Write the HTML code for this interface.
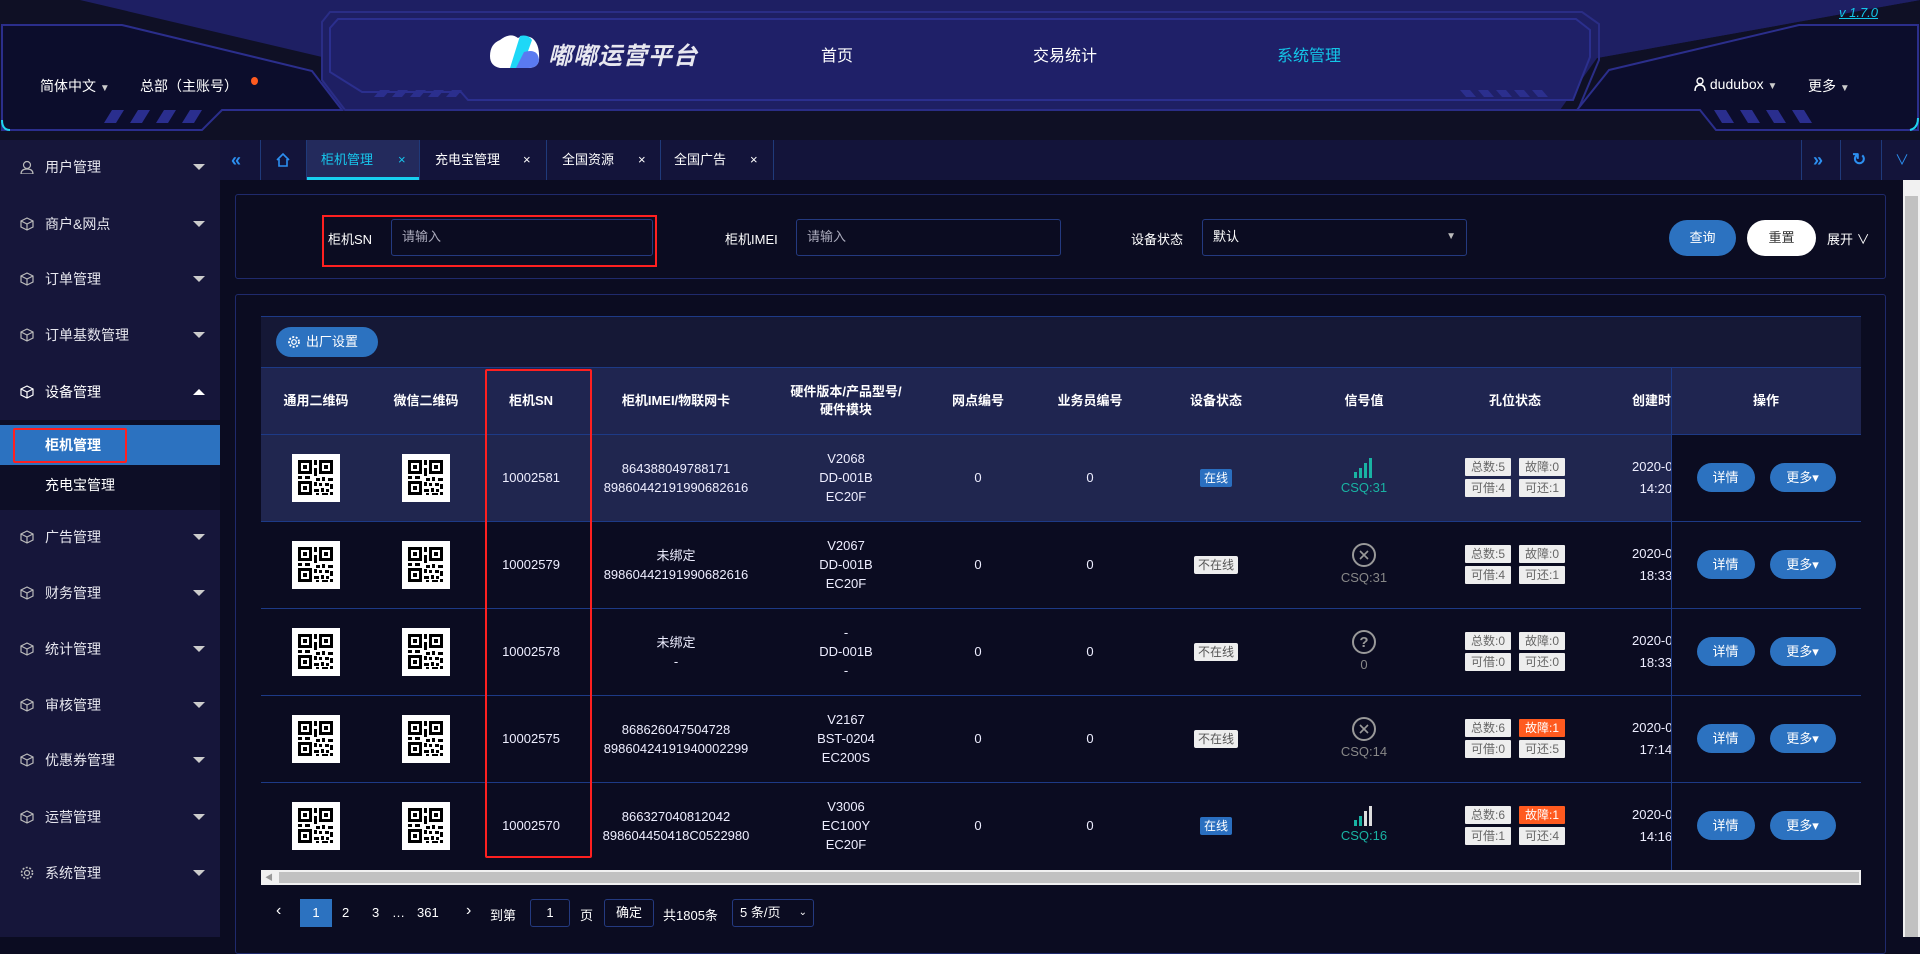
<!DOCTYPE html>
<html><head><meta charset="utf-8">
<style>
*{margin:0;padding:0;box-sizing:border-box}
body{width:1920px;height:937px;overflow:hidden;background:#0b0c21;font-family:"Liberation Sans","Noto Sans CJK SC",sans-serif;color:#fff;position:relative;font-size:13px}
.a{position:absolute}
.side{left:0;top:140px;width:220px;height:797px;background:#16163a}
.mi{position:absolute;left:0;width:220px;height:40px;line-height:40px;font-size:14px;color:#e6e6ee}
.mi svg{position:absolute;left:20px;top:13px}
.mi .t{position:absolute;left:45px}
.mi .ar{position:absolute;left:193px;top:17px;width:0;height:0;border-left:6px solid transparent;border-right:6px solid transparent;border-top:6px solid #ccc}
.tab{position:absolute;top:140px;height:40px;line-height:40px;font-size:13px;color:#fff}
.sep{position:absolute;top:140px;width:1px;height:40px;background:#1f3a7a}
.lbl{font-size:13px;color:#fff}
.inp{border:1px solid #243a80;border-radius:3px;background:#0b0c21;color:#aab;font-size:13px;line-height:34px;padding-left:10px}
.th{position:absolute;top:367px;height:67px;font-weight:bold;font-size:13px;text-align:center;display:flex;align-items:center;justify-content:center;line-height:18px}
.cell{position:absolute;text-align:center;display:flex;align-items:center;justify-content:center;flex-direction:column;font-size:13px;line-height:19px;color:#eef}
.qr{width:48px;height:48px;background:#fff}
.tag{display:inline-block;padding:0 4px;font-size:12px;line-height:18px;border-radius:2px}
.on{background:#2a6fc0;color:#fff}
.off{background:#eee;color:#555}
.kw{display:grid;grid-template-columns:46px 46px;gap:3px 8px}
.kw span{background:#eee;color:#666;font-size:12px;line-height:18px;border-radius:1px}
.kw span.r{background:#ff5a1f;color:#fff}
.btn{display:inline-block;background:#2c72c0;color:#fff;border-radius:15px;height:29px;line-height:29px;font-size:13px}
.hl{position:absolute;left:261px;width:1600px;height:1px;background:#1d3a86}
</style></head><body>

<!-- HEADER -->
<svg class="a" style="left:0;top:0" width="1920" height="140">
<rect width="1920" height="140" fill="#1e1f63"/>
<rect y="110" width="1920" height="30" fill="#0f1025"/>
<polygon points="0,0 80,0 322,57 322,110 0,110" fill="#0f1025"/>
<polygon points="1920,0 1920,110 1560,110 1597,58" fill="#0f1025"/>
<polygon points="1920,0 1597,58 1597,0" fill="#1e1f63"/>
<!-- left panel -->
<polygon points="2,25 122,25 312,71 342,110 222,110 202,130 2,130" fill="#0c0d2c" stroke="#2b2e8c" stroke-width="2"/>
<g fill="#2a2e8e"><polygon points="112,110 124,110 116,123 104,123"/><polygon points="138,110 150,110 142,123 130,123"/><polygon points="164,110 176,110 168,123 156,123"/><polygon points="190,110 202,110 194,123 182,123"/></g>
<path d="M2 120 Q2 130 10 130" stroke="#1fd3f0" stroke-width="2" fill="none"/>
<!-- center panel -->
<polygon points="330,12 1582,12 1599,24 1599,60 1578,110 345,110 322,80 322,22" fill="none" stroke="#2a2d86" stroke-width="2"/>
<polygon points="338,19 1576,19 1590,30 1590,57 1573,100 468,100 461,92 362,92 330,72 330,28" fill="#1f2068" stroke="#2b2f8e" stroke-width="2"/>
<g fill="#2b2f8e"><polygon points="380,90 390,90 384,97 374,97"/><polygon points="398,90 408,90 402,97 392,97"/><polygon points="416,90 426,90 420,97 410,97"/><polygon points="434,90 444,90 438,97 428,97"/><polygon points="452,90 462,90 456,97 446,97"/></g>
<g fill="#2b2f8e"><polygon points="1460,90 1470,90 1476,97 1466,97"/><polygon points="1478,90 1488,90 1494,97 1484,97"/><polygon points="1496,90 1506,90 1512,97 1502,97"/><polygon points="1514,90 1524,90 1530,97 1520,97"/><polygon points="1532,90 1542,90 1548,97 1538,97"/></g>
<!-- right panel -->
<polygon points="1609,70 1799,25 1918,25 1918,130 1716,130 1700,110 1577,110" fill="#0c0d2c" stroke="#2b2e8c" stroke-width="2"/>
<g fill="#2a2e8e"><polygon points="1714,110 1726,110 1734,123 1722,123"/><polygon points="1740,110 1752,110 1760,123 1748,123"/><polygon points="1766,110 1778,110 1786,123 1774,123"/><polygon points="1792,110 1804,110 1812,123 1800,123"/></g>
<path d="M1918 118 Q1918 128 1910 130" stroke="#1fd3f0" stroke-width="2" fill="none"/>
<!-- logo -->
<path d="M500 40 Q510 32 518 38 Q524 34 532 38 Q540 44 539 60 Q538 68 528 68 L500 68 Q490 66 490 56 Q490 44 500 40Z" fill="#fff"/>
<path d="M520 36 Q528 34 532 40 L522 68 L510 68 Z" fill="#1ed8f7"/>
<path d="M524 52 Q538 48 539 60 Q538 68 528 68 L516 68Z" fill="#5a7af0"/>
</svg>
<div class="a" style="left:548px;top:36px;font-size:24px;font-weight:bold;font-style:italic;color:#e8e8f0;letter-spacing:1px">嘟嘟运营平台</div>
<div class="a" style="left:821px;top:42px;font-size:16px">首页</div>
<div class="a" style="left:1033px;top:42px;font-size:16px">交易统计</div>
<div class="a" style="left:1277px;top:42px;font-size:16px;color:#13c6e8">系统管理</div>
<div class="a" style="left:40px;top:76px;font-size:14px">简体中文 <span style="font-size:10px;color:#ccc">▼</span></div>
<div class="a" style="left:140px;top:76px;font-size:14px">总部（主账号）</div>
<div class="a" style="left:251px;top:77px;width:7px;height:8px;border-radius:50%;background:#ff5a1f"></div>
<div class="a" style="left:1694px;top:76px;font-size:14px">
<svg width="12" height="14" viewBox="0 0 12 14" style="vertical-align:-2px"><circle cx="6" cy="4" r="3" fill="none" stroke="#fff" stroke-width="1.4"/><path d="M1 14 Q1 8 6 8 Q11 8 11 14" fill="none" stroke="#fff" stroke-width="1.4"/></svg> dudubox <span style="font-size:10px;color:#ccc">▼</span></div>
<div class="a" style="left:1808px;top:76px;font-size:14px">更多 <span style="font-size:10px;color:#ccc">▼</span></div>
<div class="a" style="left:1839px;top:5px;font-size:13px;font-style:italic;color:#13c6e8;text-decoration:underline">v 1.7.0</div>

<!-- TAB BAR -->
<div class="a" style="left:220px;top:140px;width:1700px;height:40px;background:#13143a"></div>
<div class="tab" style="left:231px;color:#2c8ff0;font-size:18px;font-weight:bold">«</div>
<div class="sep" style="left:260px"></div>
<svg class="a" style="left:275px;top:152px" width="16" height="16" viewBox="0 0 16 16"><path d="M2 8 L8 2 L14 8 M4 7 V14 H12 V7" fill="none" stroke="#2c8ff0" stroke-width="1.6"/></svg>
<div class="sep" style="left:306px"></div>
<div class="a" style="left:307px;top:140px;width:112px;height:40px;background:#232a5c;border-bottom:3px solid #17d0f0"></div>
<div class="tab" style="left:321px;color:#17c8ee">柜机管理</div><div class="tab" style="left:398px;color:#17c8ee">×</div>
<div class="sep" style="left:419px"></div>
<div class="tab" style="left:435px">充电宝管理</div><div class="tab" style="left:523px">×</div>
<div class="sep" style="left:546px"></div>
<div class="tab" style="left:562px">全国资源</div><div class="tab" style="left:638px">×</div>
<div class="sep" style="left:660px"></div>
<div class="tab" style="left:674px">全国广告</div><div class="tab" style="left:750px">×</div>
<div class="sep" style="left:773px"></div>
<div class="sep" style="left:1801px"></div><div class="sep" style="left:1840px"></div><div class="sep" style="left:1881px"></div>
<div class="tab" style="left:1813px;color:#2c8ff0;font-size:18px;font-weight:bold">»</div>
<div class="tab" style="left:1852px;color:#2c8ff0;font-size:17px;font-weight:bold">↻</div>
<div class="tab" style="left:1895px;color:#2c8ff0;font-size:14px">∨</div>

<!-- SIDEBAR -->
<div class="a side">
<div class="mi" style="top:7px"><svg width="14" height="14" viewBox="0 0 14 14"><circle cx="7" cy="5" r="3.5" fill="none" stroke="#bbb" stroke-width="1.2"/><path d="M1 14 Q1 9 7 9 Q13 9 13 14Z" fill="none" stroke="#bbb" stroke-width="1.2"/></svg><span class="t">用户管理</span><i class="ar"></i></div>
<div class="mi" style="top:64px"><svg width="14" height="14" viewBox="0 0 14 14"><path d="M7 1 L13 4 V10 L7 13 L1 10 V4Z M1 4 L7 7 L13 4 M7 7 V13" fill="none" stroke="#bbb" stroke-width="1.2"/></svg><span class="t">商户&amp;网点</span><i class="ar"></i></div>
<div class="mi" style="top:119px"><svg width="14" height="14" viewBox="0 0 14 14"><path d="M7 1 L13 4 V10 L7 13 L1 10 V4Z M1 4 L7 7 L13 4 M7 7 V13" fill="none" stroke="#bbb" stroke-width="1.2"/></svg><span class="t">订单管理</span><i class="ar"></i></div>
<div class="mi" style="top:175px"><svg width="14" height="14" viewBox="0 0 14 14"><path d="M7 1 L13 4 V10 L7 13 L1 10 V4Z M1 4 L7 7 L13 4 M7 7 V13" fill="none" stroke="#bbb" stroke-width="1.2"/></svg><span class="t">订单基数管理</span><i class="ar"></i></div>
<div class="mi" style="top:232px;color:#fff"><svg width="14" height="14" viewBox="0 0 14 14"><path d="M7 1 L13 4 V10 L7 13 L1 10 V4Z M1 4 L7 7 L13 4 M7 7 V13" fill="none" stroke="#fff" stroke-width="1.2"/></svg><span class="t">设备管理</span><i class="ar" style="border-top:0;border-bottom:6px solid #fff"></i></div>
<div class="a" style="left:0;top:280px;width:220px;height:90px;background:#0d0e26"></div>
<div class="a" style="left:0;top:285px;width:220px;height:40px;background:#2c72c0"></div>
<div class="a" style="left:13px;top:288px;width:114px;height:35px;border:2px solid #ff2020;border-radius:2px"></div>
<div class="mi" style="top:285px;font-size:14px;font-weight:bold;color:#fff"><span class="t">柜机管理</span></div>
<div class="mi" style="top:325px;font-size:14px;color:#fff"><span class="t">充电宝管理</span></div>
<div class="mi" style="top:377px"><svg width="14" height="14" viewBox="0 0 14 14"><path d="M7 1 L13 4 V10 L7 13 L1 10 V4Z M1 4 L7 7 L13 4 M7 7 V13" fill="none" stroke="#bbb" stroke-width="1.2"/></svg><span class="t">广告管理</span><i class="ar"></i></div>
<div class="mi" style="top:433px"><svg width="14" height="14" viewBox="0 0 14 14"><path d="M7 1 L13 4 V10 L7 13 L1 10 V4Z M1 4 L7 7 L13 4 M7 7 V13" fill="none" stroke="#bbb" stroke-width="1.2"/></svg><span class="t">财务管理</span><i class="ar"></i></div>
<div class="mi" style="top:489px"><svg width="14" height="14" viewBox="0 0 14 14"><path d="M7 1 L13 4 V10 L7 13 L1 10 V4Z M1 4 L7 7 L13 4 M7 7 V13" fill="none" stroke="#bbb" stroke-width="1.2"/></svg><span class="t">统计管理</span><i class="ar"></i></div>
<div class="mi" style="top:545px"><svg width="14" height="14" viewBox="0 0 14 14"><path d="M7 1 L13 4 V10 L7 13 L1 10 V4Z M1 4 L7 7 L13 4 M7 7 V13" fill="none" stroke="#bbb" stroke-width="1.2"/></svg><span class="t">审核管理</span><i class="ar"></i></div>
<div class="mi" style="top:600px"><svg width="14" height="14" viewBox="0 0 14 14"><path d="M7 1 L13 4 V10 L7 13 L1 10 V4Z M1 4 L7 7 L13 4 M7 7 V13" fill="none" stroke="#bbb" stroke-width="1.2"/></svg><span class="t">优惠券管理</span><i class="ar"></i></div>
<div class="mi" style="top:657px"><svg width="14" height="14" viewBox="0 0 14 14"><path d="M7 1 L13 4 V10 L7 13 L1 10 V4Z M1 4 L7 7 L13 4 M7 7 V13" fill="none" stroke="#bbb" stroke-width="1.2"/></svg><span class="t">运营管理</span><i class="ar"></i></div>
<div class="mi" style="top:713px"><svg width="14" height="14" viewBox="0 0 14 14"><circle cx="7" cy="7" r="2.5" fill="none" stroke="#bbb" stroke-width="1.2"/><circle cx="7" cy="7" r="5.5" fill="none" stroke="#bbb" stroke-width="1.6" stroke-dasharray="2 1.5"/></svg><span class="t">系统管理</span><i class="ar"></i></div>
</div>

<!-- page scrollbar -->
<div class="a" style="left:1903px;top:180px;width:17px;height:757px;background:#f1f1f1"></div>
<div class="a" style="left:1905px;top:196px;width:13px;height:741px;background:#c1c1c1"></div>

<!-- FILTER -->
<div class="a" style="left:235px;top:194px;width:1651px;height:85px;border:1px solid #1f2a6c;border-radius:3px"></div>
<div class="a lbl" style="left:328px;top:229px">柜机SN</div>
<div class="a inp" style="left:391px;top:219px;width:262px;height:37px">请输入</div>
<div class="a" style="left:322px;top:215px;width:335px;height:52px;border:2px solid #ff2020"></div>
<div class="a lbl" style="left:725px;top:229px">柜机IMEI</div>
<div class="a inp" style="left:796px;top:219px;width:265px;height:37px">请输入</div>
<div class="a lbl" style="left:1131px;top:229px">设备状态</div>
<div class="a inp" style="left:1202px;top:219px;width:265px;height:37px;color:#fff">默认<span style="position:absolute;right:10px;font-size:10px;color:#bbb">▼</span></div>
<div class="a" style="left:1669px;top:220px;width:67px;height:36px;border-radius:18px;background:#2c72c0;text-align:center;line-height:36px;font-size:13px">查询</div>
<div class="a" style="left:1747px;top:220px;width:69px;height:36px;border-radius:18px;background:#fff;color:#333;text-align:center;line-height:36px;font-size:13px">重置</div>
<div class="a lbl" style="left:1827px;top:229px">展开 ∨</div>

<!-- TABLE CARD -->
<div class="a" style="left:235px;top:294px;width:1651px;height:660px;border:1px solid #1f2a6c;border-radius:3px"></div>
<div class="a" style="left:261px;top:316px;width:1600px;height:51px;background:#151836;border-top:1px solid #1d3a86"></div>
<div class="a" style="left:276px;top:327px;width:102px;height:30px;border-radius:15px;background:#2c72c0;font-size:13px;line-height:30px;padding-left:30px">出厂设置</div>
<svg class="a" style="left:287px;top:335px" width="14" height="14" viewBox="0 0 14 14"><circle cx="7" cy="7" r="2.3" fill="none" stroke="#fff" stroke-width="1.2"/><circle cx="7" cy="7" r="5" fill="none" stroke="#fff" stroke-width="1.8" stroke-dasharray="2 1.6"/></svg>

<div class="a" style="left:261px;top:367px;width:1600px;height:67px;background:#1f2550"></div>
<div class="a" style="left:261px;top:434px;width:1410px;height:87px;background:#20264f"></div>
<div class="hl" style="top:367px"></div><div class="hl" style="top:434px"></div><div class="hl" style="top:521px"></div><div class="hl" style="top:608px"></div><div class="hl" style="top:695px"></div><div class="hl" style="top:782px"></div>
<div class="a" style="left:1671px;top:367px;width:1px;height:503px;background:#1d3a86"></div>

<div class="th" style="left:261px;width:110px">通用二维码</div>
<div class="th" style="left:371px;width:110px">微信二维码</div>
<div class="th" style="left:481px;width:100px">柜机SN</div>
<div class="th" style="left:581px;width:190px">柜机IMEI/物联网卡</div>
<div class="th" style="left:771px;width:150px">硬件版本/产品型号/<br>硬件模块</div>
<div class="th" style="left:921px;width:114px">网点编号</div>
<div class="th" style="left:1035px;width:110px">业务员编号</div>
<div class="th" style="left:1145px;width:142px">设备状态</div>
<div class="th" style="left:1287px;width:154px">信号值</div>
<div class="th" style="left:1441px;width:148px">孔位状态</div>
<div class="th" style="left:1632px;width:39px;overflow:hidden;justify-content:flex-start;white-space:nowrap">创建时间</div>
<div class="th" style="left:1671px;width:190px">操作</div>

<svg width="0" height="0" style="position:absolute"><defs>
<g id="qr"><rect width="48" height="48" fill="#fff"/>
<g fill="#000"><path d="M6 6h14v14H6z M9 9v8h8V9z M11 11h4v4h-4z"/><path d="M27 6h14v14H27z M30 9v8h8V9z M32 11h4v4h-4z"/><path d="M6 27h14v14H6z M9 30v8h8v-8z M11 32h4v4h-4z"/>
<rect x="22" y="6" width="3" height="5"/><rect x="22" y="14" width="3" height="8"/><rect x="24" y="24" width="4" height="3"/><rect x="30" y="23" width="3" height="4"/><rect x="36" y="24" width="5" height="3"/><rect x="22" y="28" width="3" height="4"/><rect x="27" y="29" width="3" height="3"/><rect x="33" y="29" width="4" height="3"/><rect x="38" y="30" width="3" height="5"/><rect x="22" y="35" width="5" height="3"/><rect x="29" y="34" width="3" height="4"/><rect x="34" y="35" width="3" height="3"/><rect x="24" y="39" width="3" height="2"/><rect x="30" y="39" width="6" height="2"/><rect x="38" y="38" width="3" height="3"/><rect x="6" y="22" width="4" height="3"/><rect x="13" y="22" width="5" height="3"/></g></g>
</defs></svg>

<!-- rows -->
<div id="rows"></div>
<!-- row 1 -->
<div class="cell" style="left:261px;top:434px;width:110px;height:87px"><svg width="48" height="48"><use href="#qr"/></svg></div>
<div class="cell" style="left:371px;top:434px;width:110px;height:87px"><svg width="48" height="48"><use href="#qr"/></svg></div>
<div class="cell" style="left:481px;top:434px;width:100px;height:87px">10002581</div>
<div class="cell" style="left:581px;top:434px;width:190px;height:87px">864388049788171<br>89860442191990682616</div>
<div class="cell" style="left:771px;top:434px;width:150px;height:87px">V2068<br>DD-001B<br>EC20F</div>
<div class="cell" style="left:921px;top:434px;width:114px;height:87px">0</div>
<div class="cell" style="left:1035px;top:434px;width:110px;height:87px">0</div>
<div class="cell" style="left:1145px;top:434px;width:142px;height:87px"><span class="tag on">在线</span></div>
<div class="cell" style="left:1287px;top:434px;width:154px;height:87px;color:#19b3a3"><svg width="22" height="20"><g fill="#19b3a3"><rect x="1" y="14" width="3" height="6"/><rect x="6" y="10" width="3" height="10"/><rect x="11" y="5" width="3" height="15"/><rect x="16" y="0" width="3" height="20"/></g></svg>CSQ:31</div>
<div class="cell" style="left:1441px;top:434px;width:148px;height:87px"><div class="kw"><span>总数:5</span><span>故障:0</span><span>可借:4</span><span>可还:1</span></div></div>
<div class="cell" style="left:1632px;top:434px;width:39px;height:87px;overflow:hidden;align-items:flex-start;white-space:nowrap;line-height:22px">2020-0<br>&nbsp;&nbsp;14:20</div>
<div class="cell" style="left:1671px;top:434px;width:190px;height:87px;flex-direction:row;gap:15px"><span class="btn" style="width:58px">详情</span><span class="btn" style="width:66px">更多▾</span></div>
<!-- row 2 -->
<div class="cell" style="left:261px;top:521px;width:110px;height:87px"><svg width="48" height="48"><use href="#qr"/></svg></div>
<div class="cell" style="left:371px;top:521px;width:110px;height:87px"><svg width="48" height="48"><use href="#qr"/></svg></div>
<div class="cell" style="left:481px;top:521px;width:100px;height:87px">10002579</div>
<div class="cell" style="left:581px;top:521px;width:190px;height:87px">未绑定<br>89860442191990682616</div>
<div class="cell" style="left:771px;top:521px;width:150px;height:87px">V2067<br>DD-001B<br>EC20F</div>
<div class="cell" style="left:921px;top:521px;width:114px;height:87px">0</div>
<div class="cell" style="left:1035px;top:521px;width:110px;height:87px">0</div>
<div class="cell" style="left:1145px;top:521px;width:142px;height:87px"><span class="tag off">不在线</span></div>
<div class="cell" style="left:1287px;top:521px;width:154px;height:87px;color:#888"><svg width="26" height="26"><circle cx="13" cy="13" r="11" fill="none" stroke="#999" stroke-width="2"/><path d="M9 9l8 8M17 9l-8 8" stroke="#999" stroke-width="1.6"/></svg>CSQ:31</div>
<div class="cell" style="left:1441px;top:521px;width:148px;height:87px"><div class="kw"><span>总数:5</span><span>故障:0</span><span>可借:4</span><span>可还:1</span></div></div>
<div class="cell" style="left:1632px;top:521px;width:39px;height:87px;overflow:hidden;align-items:flex-start;white-space:nowrap;line-height:22px">2020-0<br>&nbsp;&nbsp;18:33</div>
<div class="cell" style="left:1671px;top:521px;width:190px;height:87px;flex-direction:row;gap:15px"><span class="btn" style="width:58px">详情</span><span class="btn" style="width:66px">更多▾</span></div>
<!-- row 3 -->
<div class="cell" style="left:261px;top:608px;width:110px;height:87px"><svg width="48" height="48"><use href="#qr"/></svg></div>
<div class="cell" style="left:371px;top:608px;width:110px;height:87px"><svg width="48" height="48"><use href="#qr"/></svg></div>
<div class="cell" style="left:481px;top:608px;width:100px;height:87px">10002578</div>
<div class="cell" style="left:581px;top:608px;width:190px;height:87px">未绑定<br>-</div>
<div class="cell" style="left:771px;top:608px;width:150px;height:87px">-<br>DD-001B<br>-</div>
<div class="cell" style="left:921px;top:608px;width:114px;height:87px">0</div>
<div class="cell" style="left:1035px;top:608px;width:110px;height:87px">0</div>
<div class="cell" style="left:1145px;top:608px;width:142px;height:87px"><span class="tag off">不在线</span></div>
<div class="cell" style="left:1287px;top:608px;width:154px;height:87px;color:#888"><svg width="26" height="26"><circle cx="13" cy="13" r="11" fill="none" stroke="#999" stroke-width="2"/><text x="13" y="18" text-anchor="middle" font-size="15" font-weight="bold" fill="#999" font-family="Liberation Sans">?</text></svg>0</div>
<div class="cell" style="left:1441px;top:608px;width:148px;height:87px"><div class="kw"><span>总数:0</span><span>故障:0</span><span>可借:0</span><span>可还:0</span></div></div>
<div class="cell" style="left:1632px;top:608px;width:39px;height:87px;overflow:hidden;align-items:flex-start;white-space:nowrap;line-height:22px">2020-0<br>&nbsp;&nbsp;18:33</div>
<div class="cell" style="left:1671px;top:608px;width:190px;height:87px;flex-direction:row;gap:15px"><span class="btn" style="width:58px">详情</span><span class="btn" style="width:66px">更多▾</span></div>
<!-- row 4 -->
<div class="cell" style="left:261px;top:695px;width:110px;height:87px"><svg width="48" height="48"><use href="#qr"/></svg></div>
<div class="cell" style="left:371px;top:695px;width:110px;height:87px"><svg width="48" height="48"><use href="#qr"/></svg></div>
<div class="cell" style="left:481px;top:695px;width:100px;height:87px">10002575</div>
<div class="cell" style="left:581px;top:695px;width:190px;height:87px">868626047504728<br>89860424191940002299</div>
<div class="cell" style="left:771px;top:695px;width:150px;height:87px">V2167<br>BST-0204<br>EC200S</div>
<div class="cell" style="left:921px;top:695px;width:114px;height:87px">0</div>
<div class="cell" style="left:1035px;top:695px;width:110px;height:87px">0</div>
<div class="cell" style="left:1145px;top:695px;width:142px;height:87px"><span class="tag off">不在线</span></div>
<div class="cell" style="left:1287px;top:695px;width:154px;height:87px;color:#888"><svg width="26" height="26"><circle cx="13" cy="13" r="11" fill="none" stroke="#999" stroke-width="2"/><path d="M9 9l8 8M17 9l-8 8" stroke="#999" stroke-width="1.6"/></svg>CSQ:14</div>
<div class="cell" style="left:1441px;top:695px;width:148px;height:87px"><div class="kw"><span>总数:6</span><span class="r">故障:1</span><span>可借:0</span><span>可还:5</span></div></div>
<div class="cell" style="left:1632px;top:695px;width:39px;height:87px;overflow:hidden;align-items:flex-start;white-space:nowrap;line-height:22px">2020-0<br>&nbsp;&nbsp;17:14</div>
<div class="cell" style="left:1671px;top:695px;width:190px;height:87px;flex-direction:row;gap:15px"><span class="btn" style="width:58px">详情</span><span class="btn" style="width:66px">更多▾</span></div>
<!-- row 5 -->
<div class="cell" style="left:261px;top:782px;width:110px;height:87px"><svg width="48" height="48"><use href="#qr"/></svg></div>
<div class="cell" style="left:371px;top:782px;width:110px;height:87px"><svg width="48" height="48"><use href="#qr"/></svg></div>
<div class="cell" style="left:481px;top:782px;width:100px;height:87px">10002570</div>
<div class="cell" style="left:581px;top:782px;width:190px;height:87px">866327040812042<br>898604450418C0522980</div>
<div class="cell" style="left:771px;top:782px;width:150px;height:87px">V3006<br>EC100Y<br>EC20F</div>
<div class="cell" style="left:921px;top:782px;width:114px;height:87px">0</div>
<div class="cell" style="left:1035px;top:782px;width:110px;height:87px">0</div>
<div class="cell" style="left:1145px;top:782px;width:142px;height:87px"><span class="tag on">在线</span></div>
<div class="cell" style="left:1287px;top:782px;width:154px;height:87px;color:#19b3a3"><svg width="22" height="20"><rect x="1" y="14" width="3" height="6" fill="#19b3a3"/><rect x="6" y="10" width="3" height="10" fill="#19b3a3"/><rect x="11" y="5" width="3" height="15" fill="#ddd"/><rect x="16" y="0" width="3" height="20" fill="#ddd"/></svg>CSQ:16</div>
<div class="cell" style="left:1441px;top:782px;width:148px;height:87px"><div class="kw"><span>总数:6</span><span class="r">故障:1</span><span>可借:1</span><span>可还:4</span></div></div>
<div class="cell" style="left:1632px;top:782px;width:39px;height:87px;overflow:hidden;align-items:flex-start;white-space:nowrap;line-height:22px">2020-0<br>&nbsp;&nbsp;14:16</div>
<div class="cell" style="left:1671px;top:782px;width:190px;height:87px;flex-direction:row;gap:15px"><span class="btn" style="width:58px">详情</span><span class="btn" style="width:66px">更多▾</span></div>

<!-- red box on SN column -->
<div class="a" style="left:485px;top:369px;width:107px;height:489px;border:2px solid #ff2020;border-radius:2px"></div>

<!-- h scrollbar -->
<div class="a" style="left:261px;top:870px;width:1600px;height:15px;background:#f1f1f1"></div>
<div class="a" style="left:279px;top:872px;width:1580px;height:11px;background:#c1c1c1"></div>
<div class="a" style="left:265px;top:872px;font-size:8px;color:#999">◀</div>

<!-- pagination -->
<div class="a" style="left:276px;top:902px;font-size:16px">‹</div>
<div class="a" style="left:300px;top:899px;width:32px;height:28px;background:#2c72c0;text-align:center;line-height:28px">1</div>
<div class="a" style="left:342px;top:905px">2</div>
<div class="a" style="left:372px;top:905px">3</div>
<div class="a" style="left:392px;top:905px">…</div>
<div class="a" style="left:417px;top:905px">361</div>
<div class="a" style="left:466px;top:902px;font-size:16px">›</div>
<div class="a" style="left:490px;top:905px">到第</div>
<div class="a" style="left:530px;top:899px;width:40px;height:28px;border:1px solid #243a80;border-radius:3px;text-align:center;line-height:26px">1</div>
<div class="a" style="left:580px;top:905px">页</div>
<div class="a" style="left:604px;top:899px;width:50px;height:28px;border:1px solid #243a80;border-radius:3px;text-align:center;line-height:26px">确定</div>
<div class="a" style="left:663px;top:905px">共1805条</div>
<div class="a" style="left:732px;top:899px;width:82px;height:28px;border:1px solid #243a80;border-radius:3px;line-height:26px;padding-left:7px">5 条/页 <span style="position:absolute;right:6px;font-size:10px">⌄</span></div>
</body></html>
